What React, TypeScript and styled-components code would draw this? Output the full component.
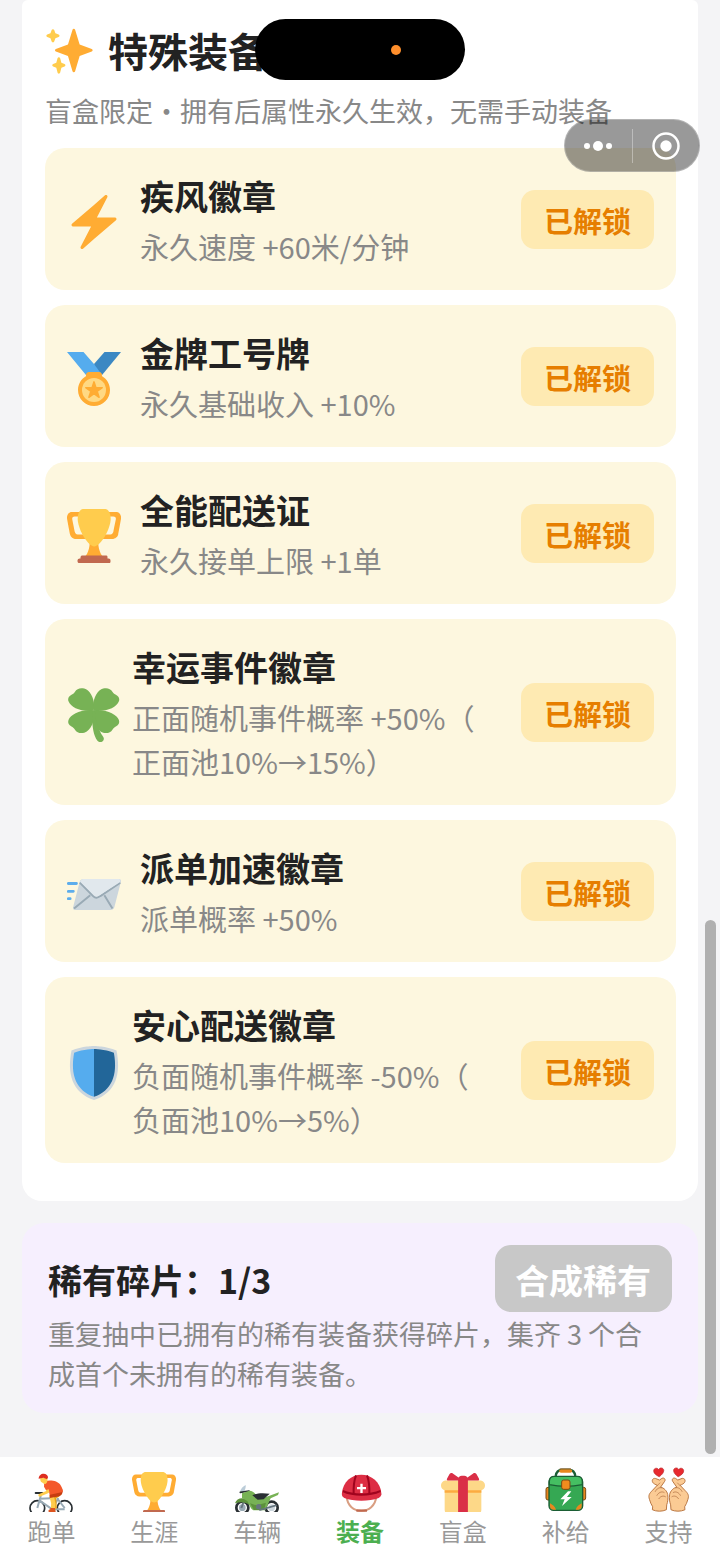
import React from 'react';
import styled, { createGlobalStyle } from 'styled-components';

const GlobalStyle = createGlobalStyle`
  * { box-sizing: border-box; }
  body {
    margin: 0;
    background: #f4f4f6;
    color: #222;
    font-family: "Noto Sans CJK SC", "Noto Sans", sans-serif;
  }
  button { font-family: inherit; border: 0; padding: 0; background: none; cursor: pointer; }
  h1, h2, h3, p, ul { margin: 0; padding: 0; }
  svg { display: block; flex: none; }
`;

const Page = styled.div`
  position: relative;
  display: flex;
  flex-direction: column;
  min-height: 100vh;
`;

const Content = styled.main`
  position: relative;
  flex: 1;
  display: flex;
  flex-direction: column;
  gap: 22px;
  padding: 0 22px 44px;
`;

const Panel = styled.section`
  padding: 22px 22px 38px 23px;
  background: #fff;
  border-radius: 6px 6px 20px 20px;
`;

const PanelTitle = styled.h1`
  display: flex;
  align-items: center;
  gap: 14px;
  font-size: 40px;
  line-height: 56px;
  font-weight: 700;
`;

const Subtitle = styled.p`
  margin: 13px 0 17px;
  font-size: 27px;
  line-height: 40px;
  color: #888;
  white-space: nowrap;
`;

const GearList = styled.ul`
  display: flex;
  flex-direction: column;
  gap: 15px;
  list-style: none;
`;

const GearCard = styled.li<{ $compact?: boolean }>`
  display: flex;
  align-items: center;
  gap: ${(p) => (p.$compact ? 11 : 19)}px;
  padding: 22px;
  background: #fdf7df;
  border-radius: 20px;
`;

const GearIcon = styled.span`
  flex: none;
  padding-top: 6px;
`;

const GearText = styled.div`
  flex: 1;
  min-width: 0;
  padding: 2px 24px 0 0;
`;

const GearName = styled.h2`
  font-size: 34px;
  line-height: 48px;
  font-weight: 700;
`;

const GearEffect = styled.p`
  margin-top: 4px;
  font-size: 29px;
  line-height: 44px;
  color: #888;
  line-break: anywhere;
`;

const Badge = styled.span`
  flex: none;
  padding: 8px 23px 7px;
  border-radius: 14px;
  background: #feeab2;
  color: #e67e00;
  font-size: 29px;
  line-height: 44px;
  font-weight: 700;
`;

const ShardPanel = styled.section`
  padding: 22px 26px 19px;
  background: #f6effe;
  border-radius: 22px;
`;

const ShardHead = styled.div`
  display: flex;
  align-items: center;
  justify-content: space-between;
`;

const ShardTitle = styled.h2`
  padding-top: 2px;
  font-size: 34px;
  line-height: 48px;
  font-weight: 700;
`;

const MergeButton = styled.button`
  height: 67px;
  padding: 2px 21px 0 20px;
  border-radius: 16px;
  background: #c8c8c8;
  color: #fff;
  font-size: 34px;
  line-height: 48px;
  font-weight: 700;
`;

const ShardNote = styled.p`
  margin-top: 2px;
  padding-right: 14px;
  font-size: 27px;
  line-height: 40px;
  color: #888;
`;

const ScrollThumb = styled.div`
  position: absolute;
  right: 4px;
  bottom: 3px;
  width: 11px;
  height: 534px;
  border-radius: 6px;
  background: #b0b0b0;
`;

const TabBar = styled.nav`
  display: flex;
  padding: 10px 0 12px;
  background: #fff;
`;

const Tab = styled.button<{ $active?: boolean }>`
  flex: 1;
  display: flex;
  flex-direction: column;
  align-items: center;
  gap: 1px;
  color: ${(p) => (p.$active ? '#4caf50' : '#999')};
  font-size: 24px;
  line-height: 36px;
  font-weight: ${(p) => (p.$active ? 700 : 400)};
`;

const TabIcon = styled.span<{ $tall?: boolean }>`
  height: 45px;
  padding-top: ${(p) => (p.$tall ? 0 : 5)}px;
  overflow: hidden;
`;

const Island = styled.div`
  position: absolute;
  top: 19px;
  left: 50%;
  width: 210px;
  height: 61px;
  margin-left: -105px;
  border-radius: 31px;
  background: #000;
  display: flex;
  align-items: center;
  justify-content: flex-end;
  padding-right: 64px;
`;

const IslandDot = styled.span`
  width: 10px;
  height: 10px;
  border-radius: 50%;
  background: #ff8f2c;
`;

const Capsule = styled.div`
  position: absolute;
  top: 119px;
  right: 20px;
  display: flex;
  align-items: center;
  width: 136px;
  height: 53px;
  border-radius: 27px;
  border: 1px solid rgba(255, 255, 255, 0.25);
  background: rgba(0, 0, 0, 0.4);
`;

const CapsuleButton = styled.button`
  flex: 1;
  display: flex;
  justify-content: center;
`;

const CapsuleDivider = styled.span`
  width: 1px;
  height: 34px;
  background: rgba(255, 255, 255, 0.35);
`;

type IconProps = { size: number };

const Sparkles = ({ size }: IconProps) => (
  <svg width={size} height={size} viewBox="0 0 36 36" aria-hidden="true">
    <path fill="#FFAC33" d="M34.347 16.893l-8.899-3.294-3.323-10.891c-.128-.42-.517-.708-.956-.708-.439 0-.828.288-.956.708l-3.322 10.891-8.900 3.294c-.393.146-.653.519-.653.938 0 .418.26.793.653.938l8.895 3.293 3.324 11.223c.126.424.516.715.959.715.442 0 .833-.291.959-.716l3.324-11.223 8.896-3.293c.391-.144.652-.518.652-.937 0-.418-.261-.792-.653-.938z" />
    <path fill="#FFCC4D" d="M14.347 27.894l-2.314-.856-.9-3.300c-.118-.436-.513-.738-.964-.738-.451 0-.846.302-.965.737l-.9 3.300-2.313.856c-.393.146-.653.520-.653.938 0 .418.260.793.653.938l2.301.853.907 3.622c.112.444.511.756.970.756.459 0 .858-.312.970-.757l.907-3.622 2.301-.853c.393-.144.653-.519.653-.937 0-.418-.260-.793-.653-.937zM10.009 6.231l-2.364-.875-.876-2.365c-.145-.393-.519-.653-.938-.653-.418 0-.792.260-.938.653l-.875 2.365-2.365.875c-.393.146-.653.520-.653.938 0 .418.260.793.653.938l2.365.875.875 2.365c.146.393.520.653.938.653.418 0 .792-.260.938-.653l.875-2.365 2.365-.875c.393-.146.653-.520.653-.938 0-.418-.260-.792-.653-.938z" />
  </svg>
);

const Bolt = ({ size }: IconProps) => (
  <svg width={size} height={size} viewBox="0 0 36 36" aria-hidden="true">
    <path fill="#FFAC33" d="M32.938 15.651C32.792 15.260 32.418 15 32 15H19.925L26.890 1.458c.219-.426.106-.947-.271-1.243C26.437.071 26.218 0 26 0c-.233 0-.466.082-.653.243L18 6.588 3.347 19.243c-.316.273-.430.714-.284 1.105S3.582 21 4 21h12.075L9.110 34.542c-.219.426-.106.947.271 1.243.182.144.401.215.619.215.233 0 .466-.082.653-.243L18 29.412l14.653-12.655c.317-.273.430-.714.285-1.106z" />
  </svg>
);

const Medal = ({ size }: IconProps) => (
  <svg width={size} height={size} viewBox="0 0 36 36" aria-hidden="true">
    <path fill="#55ACEE" d="M18 8l-7-8H0l14 17 11.521-4.750z" />
    <path fill="#3B88C3" d="M25 0l-7 8 5.390 7.312 1.227-1.489L36 0z" />
    <path fill="#FFAC33" d="M23.205 16.026c.080-.217.131-.448.131-.693 0-1.104-.896-2-2-2h-6.667c-1.105 0-2 .896-2 2 0 .245.050.476.131.693-3.258 1.826-5.464 5.307-5.464 9.307C7.335 31.224 12.111 36 18.002 36c5.892 0 10.667-4.776 10.667-10.667 0-4-2.206-7.481-5.464-9.307z" />
    <circle fill="#FFD983" cx="18" cy="25.333" r="8" />
    <path fill="#FFAC33" stroke="#FFAC33" strokeLinejoin="round" d="M18 19.900l1.300 3.900h4.200l-3.400 2.400 1.300 4-3.400-2.400-3.400 2.400 1.300-4-3.400-2.400h4.200z" />
  </svg>
);

const Trophy = ({ size }: IconProps) => (
  <svg width={size} height={size} viewBox="0 0 36 36" aria-hidden="true">
    <path fill="#FFAC33" d="M5.123 5h6C12.227 5 13 4.896 13 6V4c0-1.104-.773-2-1.877-2h-8c-2 0-3.583 2.125-3 5 0 0 1.791 9.375 1.917 9.958C2.373 18.500 4.164 20 6.081 20h6.958c1.105 0-.039-1.896-.039-3v-2c0 1.104-.773 2-1.877 2h-4c-1.104 0-1.833-1.042-2-2S3.539 7 3.539 7C3.206 5.750 4.018 5 5.123 5zm25.812 0h-6C23.831 5 22 4.896 22 6V4c0-1.104 1.831-2 2.935-2h8c2 0 3.584 2.125 3 5 0 0-1.633 9.419-1.771 10-.354 1.500-2.042 3-4 3h-7.146C21.914 20 22 18.104 22 17v-2c0 1.104 1.831 2 2.935 2h4c1.104 0 1.834-1.042 2-2s1.584-8 1.584-8C32.851 5.750 32.040 5 30.935 5zM20.832 22c0-6.958-2.709 0-2.709 0s-3-6.958-3 0-3.291 10-3.291 10h12.292c-.001 0-3.292-3.042-3.292-10z" />
    <path fill="#FFCC4D" d="M29.123 6.577c0 6.775-6.770 18.423-11 18.423-4.231 0-11-11.649-11-18.423 0-5.820 2.751-6.577 4-6.577h14c1.188 0 4 .757 4 6.577z" />
    <path fill="#C1694F" d="M27 33c0-1.104.227-2-.877-2h-16C9.018 31 9 31.896 9 33v1c0 1.104.018 2 1.123 2h16c1.104 0 .877-.896.877-2v-1z" />
    <path fill="#C1694F" d="M29 34.625c0 .760.165 1.375-1.252 1.375H8.498C7.206 36 7 35.385 7 34.625v-.250C7 33.615 7.738 33 8.498 33h19.250c.759 0 1.252.615 1.252 1.375v.250z" />
  </svg>
);

const LEAF = 'M17.8 15.2C19.2 8 15.500 1.500 11.500.4 9-.3 6.600.3 5.200 2.600 4.600 3.500 3.800 4 3 4.500 1.200 5.500.3 7 1 8.800c1.600 4 8 7.300 16.800 6.400z';

const Clover = ({ size }: IconProps) => (
  <svg width={size} height={size} viewBox="0 0 36 36" aria-hidden="true">
    <g fill="#77B255">
      <path d={LEAF} />
      <path d={LEAF} transform="matrix(-1 0 0 1 35.6 0)" />
      <path d={LEAF} transform="matrix(1 0 0 -1 0 30.2)" />
      <path d={LEAF} transform="matrix(-1 0 0 -1 35.6 30.2)" />
      <path d="M17 15l1.600 0c.2 6 2 12.500 5.400 17.300 2 2.700-1.700 5.300-3.700 2.800C17 31 16.400 22 17 15z" />
    </g>
  </svg>
);

const Envelope = ({ size }: IconProps) => (
  <svg width={size} height={size} viewBox="0 0 36 36" aria-hidden="true">
    <path d="M.9 11h5.400M.9 16.200h3.300M.9 21.100h1.200" stroke="#5DADEC" strokeWidth="1.900" strokeLinecap="round" />
    <path fill="#CCD6DD" d="M11 8h23.500c1.200 0 1.800.8 1.400 2l-4.300 16.600c-.3 1.200-1.300 2-2.600 2H5.500c-1.200 0-1.800-.8-1.400-2L8.400 10c.3-1.200 1.400-2 2.600-2z" />
    <path stroke="#99AAB5" strokeWidth="1.300" fill="none" d="M4.700 27.600l10.800-8.700M30.300 27.600l-5.400-8.700" />
    <path fill="#E1E8ED" stroke="#99AAB5" strokeWidth="1.300" d="M8.500 10.400l8.900 9c1.400 1.400 3 1.400 4.800 0l13.300-9" />
    <path fill="#E1E8ED" d="M11 8h23.500c1 0 1.400.8 1 2L22 18.700c-1.600 1.200-2.800 1.200-4 0L8.700 9.600C9.300 8.600 10 8 11 8z" />
  </svg>
);

const Shield = ({ size }: IconProps) => (
  <svg width={size} height={size} viewBox="0 0 36 36" aria-hidden="true">
    <path fill="#CCD6DD" d="M33 3c-7-3-15-3-15-3S10 0 3 3C0 18 3 31 18 36c15-5 18-18 15-33z" />
    <path fill="#55ACEE" d="M18 33.884C6.412 29.729 1.961 19.831 4.760 4.444 11.063 2.029 17.928 2 18 2z" />
    <path fill="#269" d="M31.240 4.444C24.937 2.029 18.071 2 18 2v31.884c11.588-4.155 16.039-14.053 13.240-29.440z" />
  </svg>
);

const Cyclist = ({ size }: IconProps) => (
  <svg width={size} height={size} viewBox="88 64 132 132" fill="none" aria-hidden="true">
    <g stroke="#292F33" strokeWidth="5">
      <circle cx="113" cy="172" r="22" />
      <circle cx="195" cy="172" r="22" />
    </g>
    <path d="M113 172l10-36h-4M120 144l50-2M120 150l38 26M158 176l18-34M195 172l-22-28M158 176h37" stroke="#99AAB5" strokeWidth="6" strokeLinejoin="round" />
    <path d="M108 127h20" stroke="#292F33" strokeWidth="6" strokeLinecap="round" />
    <path d="M182 128c-6 8-12 10-17 12l2 34" stroke="#E8A21A" strokeWidth="9" />
    <path d="M155 132l6 26-1 18" stroke="#FFCC4D" strokeWidth="13" />
    <path fill="#DD551F" d="M152 172h14l2 12h-21c-2-5 1-8 5-8z" />
    <path fill="#C63D12" d="M150 122l38-6c4 12-4 22-16 22l-22 4z" />
    <path fill="#F4582A" d="M136 92c14-6 38-2 46 10 5 8 8 15 7 22l-38 8-7-22-10-6z" />
    <path d="M140 110l5 13-25 11" stroke="#FFCC4D" strokeWidth="8" strokeLinecap="round" strokeLinejoin="round" />
    <path fill="#F4582A" d="M134 96l16-4 4 22-15 4-6-10z" />
    <path fill="#FFCC4D" d="M122 82h21c2 10-2 18-8 18-4 0-5-4-9-5-3-1-5-7-4-13z" />
    <path fill="#DD2E1F" d="M117 84c0-9 7-15 15-15 7 0 12 4 13 10 0 4-2 6-4 6l-10-4z" />
  </svg>
);

const Motorcycle = ({ size }: IconProps) => (
  <svg width={size} height={size} viewBox="15 64 132 132" fill="none" aria-hidden="true">
    <g stroke="#292F33" strokeWidth="8" fill="#fff">
      <circle cx="37" cy="171" r="18" />
      <circle cx="125" cy="171" r="18" />
    </g>
    <circle cx="37" cy="171" r="10" fill="#99AAB5" />
    <circle cx="125" cy="171" r="10" fill="#CCD6DD" />
    <path d="M50 130L34 172" stroke="#66757F" strokeWidth="6" />
    <path fill="#BBCCD8" d="M29 127c3-13 10-20 18-24 1 7-1 14-7 22z" />
    <path d="M31 125l26-4" stroke="#292F33" strokeWidth="5" strokeLinecap="round" />
    <path fill="#5C913B" d="M15 158c4-14 20-19 35-12 6 4 10 10 10 18-12-9-26-12-45-6z" />
    <path fill="#77B255" d="M36 128l22-8c8 0 14 4 18 10l24 12 47-17-3 8-22 10-16 36H70c-8-4-10-14-18-28l-16-9z" />
    <path fill="#5C913B" d="M60 158l20 6 28-8-6 22H72z" />
    <path fill="#292F33" d="M67 134c16-8 34-7 52-5l-18 17-18 1z" />
    <circle cx="86" cy="168" r="8" fill="#66757F" />
    <path d="M90 178l48-14" stroke="#66757F" strokeWidth="5" strokeLinecap="round" />
  </svg>
);

const RescueHelmet = ({ size }: IconProps) => (
  <svg width={size} height={size} viewBox="324 64 132 132" fill="none" aria-hidden="true">
    <path d="M350 138c2 28 22 42 44 42s42-14 45-42" stroke="#D99E82" strokeWidth="6" />
    <path d="M382 180h26" stroke="#C1694F" strokeWidth="7" strokeLinecap="round" />
    <path fill="#DD2E44" d="M336 128c2-34 28-56 58-56s58 22 60 56l-14 14h-92z" />
    <path d="M378 74c-6 16-8 34-7 58M411 74c6 16 8 34 7 58" stroke="#A0041E" strokeWidth="6" />
    <path fill="#A0041E" d="M339 118c30 14 80 14 112 0l3 14-18 8h-80l-20-8z" />
    <path fill="#DD2E44" d="M337 124c30 15 84 15 115 0 4 6 2 14-6 18-28 11-76 11-103 0-8-4-9-12-6-18z" />
    <path fill="#fff" d="M391 99h7v10h10v7h-10v11h-7v-11h-10v-7h10z" />
  </svg>
);

const Gift = ({ size }: IconProps) => (
  <svg width={size} height={size} viewBox="0 0 36 36" aria-hidden="true">
    <path fill="#FDD888" d="M33 31c0 2.200-1.800 4-4 4H7c-2.200 0-4-1.800-4-4V14c0-2.200 1.800-4 4-4h22c2.200 0 4 1.800 4 4v17z" />
    <path fill="#FDD888" d="M36 11c0 2.200-1.800 4-4 4H4c-2.200 0-4-1.800-4-4s1.800-4 4-4h28c2.200 0 4 1.800 4 4z" />
    <path fill="#FCAB40" d="M3 15h30v2H3z" />
    <path fill="#DA2F47" d="M19 3h-2c-1.657 0-3 1.343-3 3v29h8V6c0-1.656-1.343-3-3-3z" />
    <path fill="#DA2F47" d="M16 7c1.100 0 1.263-.516.361-1.147L9.639 1.147c-.902-.631-2.085-.366-2.631.589L4.992 5.264C4.446 6.219 4.900 7 6 7h10zm4 0c-1.100 0-1.263-.516-.361-1.147l6.723-4.706c.901-.631 2.085-.366 2.631.589l2.016 3.527c.545.956.091 1.737-1.009 1.737H20z" />
  </svg>
);

const Backpack = ({ size }: IconProps) => (
  <svg width={size} height={size + 1} viewBox="191 51 132 135" fill="none" aria-hidden="true">
    <path d="M226 78c2-12 8-18 18-18h24c10 0 15 6 17 18" stroke="#1B5E34" strokeWidth="7" />
    <path d="M242 63h28" stroke="#E8871E" strokeWidth="11" strokeLinecap="round" />
    <path d="M238 56h34" stroke="#7A4A14" strokeWidth="2" />
    <rect x="197" y="112" width="16" height="38" rx="6" fill="#E8871E" stroke="#7A4A14" strokeWidth="3" />
    <rect x="300" y="112" width="16" height="38" rx="6" fill="#E8871E" stroke="#7A4A14" strokeWidth="3" />
    <rect x="206" y="82" width="101" height="99" rx="14" fill="#35A853" stroke="#1B5E34" strokeWidth="4" />
    <path fill="#45BF62" stroke="#1B5E34" strokeWidth="4" d="M207 104V94c0-10 6-15 15-15h69c9 0 15 5 15 15v10c-30 6-70 6-99 0z" />
    <path fill="#E8871E" d="M209 160c8 4 15 10 18 19h-8c-6 0-10-4-10-10zM304 160c-8 4-15 10-18 19h8c6 0 10-4 10-10z" />
    <rect x="244" y="90" width="25" height="28" rx="6" fill="#F08C1E" stroke="#7A4A14" strokeWidth="3" />
    <path fill="#fff" d="M263 124l-23 24h13l-8 20 29-27h-14l13-17z" />
  </svg>
);

const HAND = 'M506 150c-4-12 0-18 8-26l16-17c-5-2-12-5-14-9-4-8 2-13 8-12l13 5 7-5c8-4 13 4 8 10l-12 17c10 1 20 12 22 22 2 12 0 24-3 32l-1 15c-12 6-31 6-43 0l1-9c-4-7-8-14-10-23z';

const HeartHand = () => (
  <>
    <path fill="#FBCB94" stroke="#B87642" strokeWidth="3" strokeLinejoin="round" d={HAND} />
    <path d="M530 108l8-8M524 126c4-8 12-14 20-11M529 138c4-8 14-14 22-9M535 148c5-8 14-10 20-6" stroke="#A8683A" strokeWidth="2" strokeLinecap="round" />
    <path fill="#E8292F" stroke="#B8282C" strokeWidth="2" d="M536 81c-10-5-17-11-17-18 0-9 11-11 15-4 4-8 15-6 16 2 0 8-6 14-14 20z" />
  </>
);

const FingerHearts = ({ size }: IconProps) => (
  <svg width={size} height={size + 1} viewBox="500 51 132 138" fill="none" aria-hidden="true">
    <HeartHand />
    <g transform="matrix(-1 0 0 1 1130 0)">
      <HeartHand />
    </g>
  </svg>
);

const gear = [
  { name: '疾风徽章', effect: '永久速度 +60米/分钟', Icon: Bolt },
  { name: '金牌工号牌', effect: '永久基础收入 +10%', Icon: Medal },
  { name: '全能配送证', effect: '永久接单上限 +1单', Icon: Trophy },
  { name: '幸运事件徽章', effect: '正面随机事件概率 +50%（正面池10%→15%）', Icon: Clover, compact: true },
  { name: '派单加速徽章', effect: '派单概率 +50%', Icon: Envelope },
  { name: '安心配送徽章', effect: '负面随机事件概率 -50%（负面池10%→5%）', Icon: Shield, compact: true },
];

const tabs = [
  { label: '跑单', Icon: Cyclist },
  { label: '生涯', Icon: Trophy },
  { label: '车辆', Icon: Motorcycle },
  { label: '装备', Icon: RescueHelmet, active: true },
  { label: '盲盒', Icon: Gift },
  { label: '补给', Icon: Backpack, tall: true },
  { label: '支持', Icon: FingerHearts, tall: true },
];

export default function App() {
  return (
    <Page>
      <GlobalStyle />
      <Content>
        <Panel>
          <PanelTitle>
            <Sparkles size={49} />
            特殊装备
          </PanelTitle>
          <Subtitle>盲盒限定・拥有后属性永久生效，无需手动装备</Subtitle>
          <GearList>
            {gear.map(({ name, effect, Icon, compact }) => (
              <GearCard key={name} $compact={compact}>
                <GearIcon>
                  <Icon size={54} />
                </GearIcon>
                <GearText>
                  <GearName>{name}</GearName>
                  <GearEffect>{effect}</GearEffect>
                </GearText>
                <Badge>已解锁</Badge>
              </GearCard>
            ))}
          </GearList>
        </Panel>

        <ShardPanel>
          <ShardHead>
            <ShardTitle>稀有碎片：1/3</ShardTitle>
            <MergeButton type="button">合成稀有</MergeButton>
          </ShardHead>
          <ShardNote>重复抽中已拥有的稀有装备获得碎片，集齐 3 个合成首个未拥有的稀有装备。</ShardNote>
        </ShardPanel>
        <ScrollThumb />
      </Content>

      <TabBar>
        {tabs.map(({ label, Icon, active, tall }) => (
          <Tab key={label} type="button" $active={active} aria-current={active ? 'page' : undefined}>
            <TabIcon $tall={tall}>
              <Icon size={44} />
            </TabIcon>
            {label}
          </Tab>
        ))}
      </TabBar>

      <Island>
        <IslandDot />
      </Island>
      <Capsule>
        <CapsuleButton type="button" aria-label="更多">
          <svg width="30" height="12" viewBox="0 0 30 12" fill="#fff">
            <circle cx="4" cy="6" r="3" />
            <circle cx="15" cy="6" r="5" />
            <circle cx="26" cy="6" r="3" />
          </svg>
        </CapsuleButton>
        <CapsuleDivider />
        <CapsuleButton type="button" aria-label="关闭">
          <svg width="28" height="28" viewBox="0 0 28 28" fill="none">
            <circle cx="14" cy="14" r="12.500" stroke="#fff" strokeWidth="2.500" />
            <circle cx="14" cy="14" r="5.700" fill="#fff" />
          </svg>
        </CapsuleButton>
      </Capsule>
    </Page>
  );
}
